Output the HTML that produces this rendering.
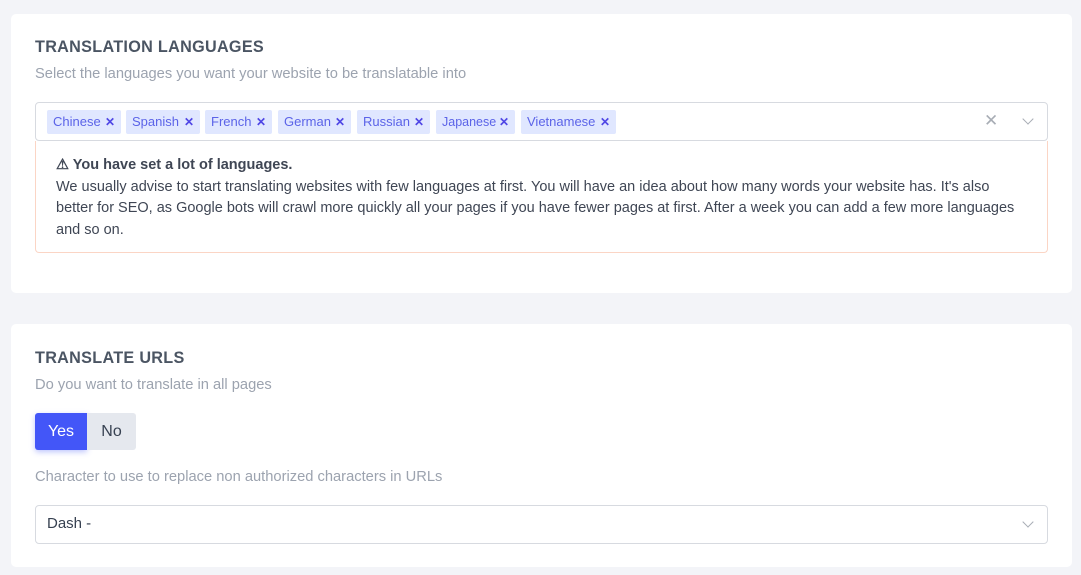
<!DOCTYPE html>
<html><head><style>
*{box-sizing:border-box;margin:0;padding:0}
body{width:1081px;height:575px;background:#f3f4f8;font-family:"Liberation Sans",sans-serif;position:relative;overflow:hidden}
.card{position:absolute;left:11px;width:1061px;background:#fff;border-radius:5px}
.h{position:absolute;left:24px;font-size:16.2px;font-weight:bold;color:#4b5563;letter-spacing:.3px}
.sub{position:absolute;left:24px;font-size:14.7px;color:#9ca3af}
.sel{position:absolute;left:24px;width:1013px;border:1px solid #d7dae0;border-radius:4px;background:#fff}
.chip{position:absolute;top:7px;height:24px;background:#e0e7ff;color:#5b63e8;font-size:13px;line-height:24px;padding-left:6px;border-radius:2px;white-space:nowrap}
.chip b{position:absolute;right:6px;top:0;font-size:12px;color:#4f46e5}
.warn{position:absolute;left:24px;top:127px;width:1013px;height:112px;border:1px solid #fbd5c5;border-top:none;border-radius:0 0 4px 4px;padding:14px 20px;font-size:14.5px;color:#3f4654;line-height:21.5px}
.chev{position:absolute;width:8px;height:8px;border-right:1.6px solid #a8adb5;border-bottom:1.6px solid #a8adb5;transform:rotate(45deg)}
</style></head><body>
<div class="card" style="top:14px;height:279px">
 <div class="h" style="top:24px">TRANSLATION LANGUAGES</div>
 <div class="sub" style="top:52px">Select the languages you want your website to be translatable into</div>
 <div class="sel" style="top:88px;height:39px">
  <div class="chip" style="left:11px;width:74px">Chinese<b>✕</b></div>
  <div class="chip" style="left:90px;width:74px">Spanish<b>✕</b></div>
  <div class="chip" style="left:169px;width:67px">French<b>✕</b></div>
  <div class="chip" style="left:242px;width:73px">German<b>✕</b></div>
  <div class="chip" style="left:321px;width:73px">Russian<b>✕</b></div>
  <div class="chip" style="left:400px;width:79px;font-size:12.5px">Japanese<b>✕</b></div>
  <div class="chip" style="left:485px;width:95px">Vietnamese<b>✕</b></div>
  <div style="position:absolute;left:948px;top:8px;font-size:17px;color:#a8adb5">✕</div>
  <div class="chev" style="left:988px;top:12px"></div>
 </div>
 <div class="warn"><b>⚠ You have set a lot of languages.</b><br>We usually advise to start translating websites with few languages at first. You will have an idea about how many words your website has. It's also better for SEO, as Google bots will crawl more quickly all your pages if you have fewer pages at first. After a week you can add a few more languages and so on.</div>
</div>
<div class="card" style="top:324px;height:243px">
 <div class="h" style="top:25px">TRANSLATE URLS</div>
 <div class="sub" style="top:53px">Do you want to translate in all pages</div>
 <div style="position:absolute;left:24px;top:89px;width:52px;height:37px;background:#4356f8;color:#fff;font-size:16px;line-height:37px;text-align:center;border-radius:3px 0 0 3px;box-shadow:0 2px 6px rgba(67,86,248,.35)">Yes</div>
 <div style="position:absolute;left:76px;top:89px;width:49px;height:37px;background:#e5e8ee;color:#374151;font-size:16px;line-height:37px;text-align:center;border-radius:0 3px 3px 0">No</div>
 <div class="sub" style="top:145px">Character to use to replace non authorized characters in URLs</div>
 <div class="sel" style="top:181px;height:39px">
  <div style="position:absolute;left:11px;top:9px;font-size:15px;color:#374151">Dash -</div>
  <div class="chev" style="left:988px;top:12px"></div>
 </div>
</div>
</body></html>
